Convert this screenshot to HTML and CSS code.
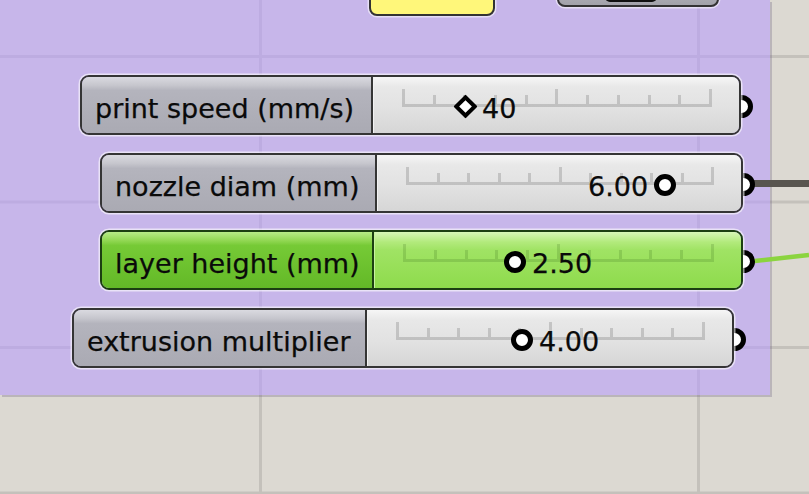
FILE: index.html
```html
<!DOCTYPE html>
<html lang="en">
<head>
    <meta charset="UTF-8">
    <meta name="viewport" content="width=device-width, initial-scale=1.0">
    <title>Sliders</title>
    <link rel="stylesheet" href="styles.css">
</head>
<body>

<div class="canvas">
    <div class="group"></div>

    <!-- wires leaving the slider outputs -->
    <svg class="wires" width="809" height="494">
        <line x1="745" y1="183.5" x2="809" y2="183.5" stroke="#58554f" stroke-width="7"/>
        <line x1="745" y1="262" x2="809" y2="255" stroke="#8bd43f" stroke-width="4.5"/>
    </svg>

    <!-- components cut off at the top -->
    <div class="stub stub-panel"></div>
    <div class="stub stub-toggle"><span class="stub-knob"></span></div>

    <div class="node slider speed">
        <span class="port"></span>
        <div class="body">
            <div class="label">print speed (mm/s)</div>
            <div class="value">
                <div class="ticks"><i class="m"></i><i></i><i></i><i></i><i></i><i class="m"></i><i></i><i></i><i></i><i></i><i class="m"></i></div>
                <div class="readout" style="left: 81px"><span class="knob diamond"></span><span class="num">40</span></div>
            </div>
        </div>
    </div>

    <div class="node slider nozzle">
        <span class="port"></span>
        <div class="body">
            <div class="label">nozzle diam (mm)</div>
            <div class="value">
                <div class="ticks"><i class="m"></i><i></i><i></i><i></i><i></i><i class="m"></i><i></i><i></i><i></i><i></i><i class="m"></i></div>
                <div class="readout" style="left: 210px"><span class="num">6.00</span><span class="knob"></span></div>
            </div>
        </div>
    </div>

    <div class="node slider layer active">
        <span class="port"></span>
        <div class="body">
            <div class="label">layer height (mm)</div>
            <div class="value">
                <div class="ticks"><i class="m"></i><i></i><i></i><i></i><i></i><i class="m"></i><i></i><i></i><i></i><i></i><i class="m"></i></div>
                <div class="readout" style="left: 129px"><span class="knob"></span><span class="num">2.50</span></div>
            </div>
        </div>
    </div>

    <div class="node slider extrusion">
        <span class="port"></span>
        <div class="body">
            <div class="label">extrusion multiplier</div>
            <div class="value">
                <div class="ticks"><i class="m"></i><i></i><i></i><i></i><i></i><i class="m"></i><i></i><i></i><i></i><i></i><i class="m"></i></div>
                <div class="readout" style="left: 143px"><span class="knob"></span><span class="num">4.00</span></div>
            </div>
        </div>
    </div>
</div>

</body>
</html>
```

FILE: styles.css
```css
* {
    box-sizing: border-box;
}

body {
    margin: 0;
    font-family: "DejaVu Sans", "Liberation Sans", sans-serif;
    background: #dcd9d2;
}

.canvas {
    position: relative;
    width: 809px;
    height: 494px;
    overflow: hidden;
    background-color: #dcd9d2;
    background-image:
        linear-gradient(to right, #c4c1bb 3px, transparent 3px),
        linear-gradient(to bottom, #c4c1bb 3px, transparent 3px);
    background-size: 438px 100%, 100% 145.5px;
    background-position: 259px 0, 0 55px;
}

/* purple group behind the sliders */
.group {
    position: absolute;
    left: 0;
    top: 0;
    width: 770px;
    height: 395px;
    background: rgba(185, 159, 250, 0.6);
    box-shadow: 2px 2px 0 rgba(110, 100, 130, 0.3);
}

.wires {
    position: absolute;
    left: 0;
    top: 0;
}

.stub {
    position: absolute;
    border: 2px solid #333;
    border-radius: 8px;
    box-shadow: 0 0 0 1.5px rgba(255, 255, 255, 0.55);
}

.stub-panel {
    left: 369px;
    top: -12px;
    width: 126px;
    height: 28px;
    background: #fff77a;
}

.stub-toggle {
    left: 557px;
    top: -14px;
    width: 162px;
    height: 21px;
    background: linear-gradient(#b4b4bc, #a2a2aa);
    display: flex;
    justify-content: center;
}

.stub-knob {
    width: 52px;
    height: 14px;
    margin-left: -14px;
    background: #111;
    border-radius: 5px;
}

/* number slider */
.node {
    position: absolute;
    height: 60px;
}

.speed { left: 80px; top: 75px; width: 661px; }
.nozzle { left: 100px; top: 153px; width: 643px; }
.layer { left: 100px; top: 230px; width: 643px; }
.extrusion { left: 72px; top: 308px; width: 662px; }

.speed .label { width: 291px; }
.nozzle .label { width: 275px; }
.layer .label { width: 272px; }
.extrusion .label { width: 293px; }

.body {
    position: relative;
    z-index: 1;
    display: flex;
    height: 100%;
    border: 2px solid #353535;
    border-radius: 9px;
    overflow: hidden;
    box-shadow: 0 0 0 1.5px rgba(255, 255, 255, 0.6);
}

.label {
    flex: none;
    display: flex;
    align-items: center;
    padding: 6px 0 0 13px;
    font-size: 27px;
    color: #0a0a0a;
    -webkit-text-stroke: 0.25px #0a0a0a;
    white-space: nowrap;
    border-right: 2px solid #353535;
    background: linear-gradient(#dadae0 0, #c6c6cd 15%, #b4b4bd 24%, #aaaab3 100%);
}

.value {
    position: relative;
    flex: 1;
    border-left: 1px solid #f2f2f2;
    background: linear-gradient(#f6f6f6 0, #e8e8e8 18%, #e2e2e2 55%, #d6d6d6 100%);
}

.ticks {
    position: absolute;
    left: 28px;
    right: 27px;
    top: 12px;
    height: 18px;
    display: flex;
    justify-content: space-between;
    align-items: flex-end;
    border-bottom: 3px solid rgba(0, 0, 0, 0.15);
}

.ticks i {
    width: 3px;
    height: 9px;
    background: rgba(0, 0, 0, 0.15);
}

.ticks i.m {
    height: 15px;
}

.readout {
    position: absolute;
    top: 0;
    bottom: 0;
    display: flex;
    align-items: center;
    gap: 6px;
    padding-top: 3px;
}

.num {
    padding-top: 3px;
    font-size: 27px;
    color: #0a0a0a;
    -webkit-text-stroke: 0.25px #0a0a0a;
}

.knob {
    width: 22px;
    height: 22px;
    border: 5.5px solid #000;
    border-radius: 50%;
    background: #fff;
}

.knob.diamond {
    width: 17px;
    height: 17px;
    margin: 0 2px;
    border-width: 4.5px;
    border-radius: 1px;
    transform: rotate(45deg);
}

.port {
    position: absolute;
    z-index: 0;
    right: -12px;
    top: 50%;
    width: 23px;
    height: 23px;
    margin-top: -10px;
    border: 5px solid #000;
    border-radius: 50%;
    background: #fff;
}

/* selected slider */
.active .body {
    border-color: #1c3f12;
}

.active .label {
    border-right-color: #1c3f12;
    background: linear-gradient(#b8ec88 0, #92d854 15%, #76ca36 24%, #63b927 100%);
}

.active .value {
    border-left-color: #c8f2a0;
    background: linear-gradient(#d8f7b8 0, #b2ea7c 18%, #a0e364 32%, #8edb4c 100%);
}

.active .ticks {
    border-bottom-color: rgba(20, 70, 0, 0.15);
}

.active .ticks i {
    background: rgba(20, 70, 0, 0.15);
}
```
